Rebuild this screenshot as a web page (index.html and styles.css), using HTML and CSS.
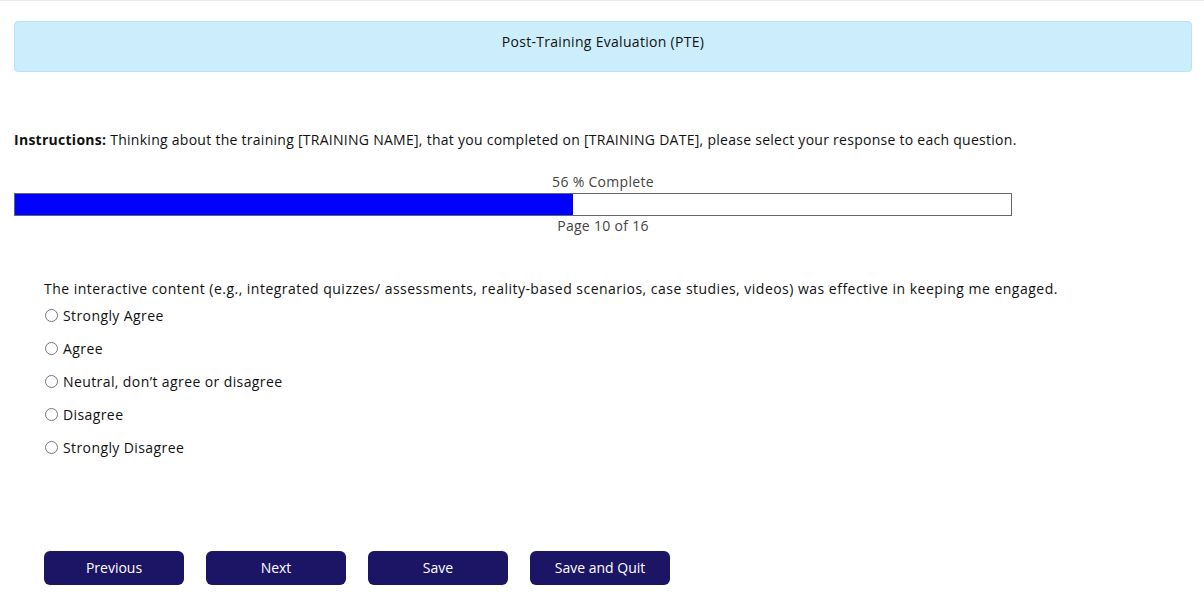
FILE: index.html
```html
<!DOCTYPE html>
<html lang="en">
<head>
  <meta charset="UTF-8">
  <meta name="viewport" content="width=device-width, initial-scale=1.0">
  <title>Post-Training Evaluation (PTE)</title>
  <link rel="stylesheet" href="styles.css">
</head>
<body>
  <div class="page">
    <!-- Survey title -->
    <div class="title-box">Post-Training Evaluation (PTE)</div>

    <p class="instructions"><b>Instructions:</b> Thinking about the training [TRAINING NAME], that you completed on [TRAINING DATE], please select your response to each question.</p>

    <!-- Progress -->
    <div class="progress">
      <div class="progress-label">56 % Complete</div>
      <div class="progress-bar"><div class="progress-fill" style="width: 56%"></div></div>
      <div class="progress-label">Page 10 of 16</div>
    </div>

    <!-- Question -->
    <div class="question">
      <div class="question-text">The interactive content (e.g., integrated quizzes/ assessments, reality-based scenarios, case studies, videos) was effective in keeping me engaged.</div>
      <label class="option"><input type="radio" name="q10"> Strongly Agree</label>
      <label class="option"><input type="radio" name="q10"> Agree</label>
      <label class="option"><input type="radio" name="q10"> Neutral, don’t agree or disagree</label>
      <label class="option"><input type="radio" name="q10"> Disagree</label>
      <label class="option"><input type="radio" name="q10"> Strongly Disagree</label>
    </div>

    <!-- Navigation buttons -->
    <div class="buttons">
      <button class="btn">Previous</button>
      <button class="btn">Next</button>
      <button class="btn">Save</button>
      <button class="btn">Save and Quit</button>
    </div>
  </div>
</body>
</html>
```

FILE: styles.css
```css
* {
  box-sizing: border-box;
}

body {
  margin: 0;
  font-family: "Open Sans", "Liberation Sans", sans-serif;
  font-size: 14px;
  color: #111;
  background: #fff;
  border-top: 1px solid #e8ebf0;
}

.page {
  padding: 20px 12px 0 14px;
}

/* Title box */
.title-box {
  height: 51px;
  line-height: 40px;
  text-align: center;
  background-color: #cceefc;
  border: 1px solid #b6e3f6;
  border-radius: 4px;
  letter-spacing: 0.3px;
}

.instructions {
  margin: 58px 0 0 0;
  line-height: 20px;
  letter-spacing: 0.27px;
}

.instructions b {
  font-weight: 700;
}

/* Progress */
.progress {
  margin-top: 22px;
  text-align: center;
  color: #444;
}

.progress-label {
  line-height: 20px;
  letter-spacing: 0.3px;
}

.progress-label:first-child {
  margin-bottom: 1px;
}

.progress-bar {
  width: 998px;
  height: 23px;
  border: 1px solid #666;
  background: #fff;
}

.progress-fill {
  height: 100%;
  background: #0000ff;
}

/* Question */
.question {
  margin: 43px 0 0 30px;
}

.question-text {
  line-height: 20px;
  letter-spacing: 0.48px;
}

.option {
  display: flex;
  align-items: center;
  height: 33px;
  letter-spacing: 0.4px;
}

.option input {
  margin: 0 5px 0 1px;
  width: 13px;
  height: 13px;
}

/* Buttons */
.buttons {
  display: flex;
  gap: 22px;
  margin: 87px 0 0 30px;
}

.btn {
  width: 140px;
  height: 34px;
  padding: 0 0 2px;
  background-color: #1c1566;
  color: #fff;
  border: none;
  border-radius: 6px;
  font-family: inherit;
  font-size: 14px;
  font-weight: 500;
  cursor: pointer;
}
```
